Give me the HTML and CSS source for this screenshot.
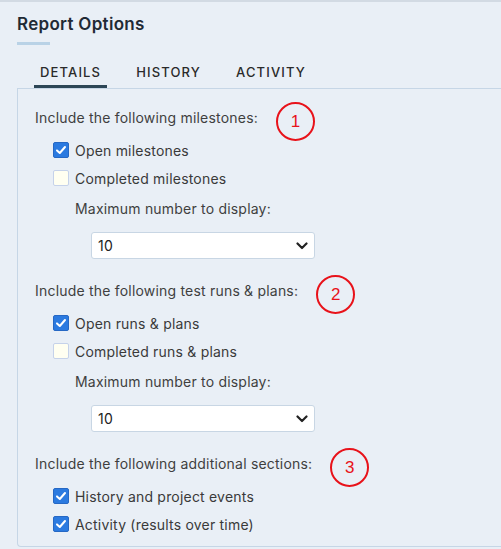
FILE: index.html
```html
<!DOCTYPE html>
<html>
<head>
<meta charset="utf-8">
<link rel="stylesheet" href="styles.css">
</head>
<body>
<div class="page">
  <h1 class="title">Report Options</h1>
  <div class="title-bar"></div>
  <nav class="tabs">
    <span class="tab active">DETAILS</span>
    <span class="tab">HISTORY</span>
    <span class="tab">ACTIVITY</span>
  </nav>
  <section class="panel">
    <div class="heading">Include the following milestones:<span class="mark">1</span></div>
    <div class="options">
      <label class="opt"><span class="box checked"><svg viewBox="0 0 16 16" width="16" height="16"><path d="M4 8.4 L6.8 11 L12 5" fill="none" stroke="#fff" stroke-width="2" stroke-linecap="round" stroke-linejoin="round"/></svg></span>Open milestones</label>
      <label class="opt"><span class="box"></span>Completed milestones</label>
    </div>
    <div class="max-label">Maximum number to display:</div>
    <div class="select"><span>10</span><svg class="chev" viewBox="0 0 12 8" width="12" height="8"><path d="M1.5 1.5 L6 6 L10.5 1.5" fill="none" stroke="#222" stroke-width="2.2" stroke-linecap="round" stroke-linejoin="round"/></svg></div>

    <div class="heading spaced">Include the following test runs &amp; plans:<span class="mark">2</span></div>
    <div class="options">
      <label class="opt"><span class="box checked"><svg viewBox="0 0 16 16" width="16" height="16"><path d="M4 8.4 L6.8 11 L12 5" fill="none" stroke="#fff" stroke-width="2" stroke-linecap="round" stroke-linejoin="round"/></svg></span>Open runs &amp; plans</label>
      <label class="opt"><span class="box"></span>Completed runs &amp; plans</label>
    </div>
    <div class="max-label">Maximum number to display:</div>
    <div class="select"><span>10</span><svg class="chev" viewBox="0 0 12 8" width="12" height="8"><path d="M1.5 1.5 L6 6 L10.5 1.5" fill="none" stroke="#222" stroke-width="2.2" stroke-linecap="round" stroke-linejoin="round"/></svg></div>

    <div class="heading spaced">Include the following additional sections:<span class="mark">3</span></div>
    <div class="options">
      <label class="opt"><span class="box checked"><svg viewBox="0 0 16 16" width="16" height="16"><path d="M4 8.4 L6.8 11 L12 5" fill="none" stroke="#fff" stroke-width="2" stroke-linecap="round" stroke-linejoin="round"/></svg></span>History and project events</label>
      <label class="opt"><span class="box checked"><svg viewBox="0 0 16 16" width="16" height="16"><path d="M4 8.4 L6.8 11 L12 5" fill="none" stroke="#fff" stroke-width="2" stroke-linecap="round" stroke-linejoin="round"/></svg></span>Activity (results over time)</label>
    </div>
  </section>
</div>
</body>
</html>
```
FILE: styles.css
```css
html, body {
  margin: 0;
  padding: 0;
}
body {
  background: #e9eff6;
  font-family: Inter, "Noto Sans", sans-serif;
  color: #3d3d3d;
  font-size: 14px;
  letter-spacing: 0.2px;
  height: 549px;
  overflow: hidden;
}
.page {
  border-top: 2px solid #d2dae3;
  padding-left: 17px;
}
.title {
  margin: 12px 0 0;
  font-size: 17px;
  line-height: 20px;
  font-weight: 600;
  letter-spacing: 0.3px;
  color: #1f2a35;
}
.title-bar {
  margin-top: 8px;
  width: 33px;
  height: 3px;
  background: #b9d2e6;
}
.tabs {
  display: flex;
  gap: 23px;
  margin-top: 17px;
  padding-left: 17px;
}
.tab {
  padding: 0 6px 3px;
  line-height: 20px;
  font-size: 13px;
  font-weight: 500;
  letter-spacing: 1.15px;
  color: #2a2a2a;
  border-bottom: 3px solid transparent;
}
.tab.active {
  border-bottom-color: #2c4656;
}
.panel {
  border: 1px solid #c6d6e6;
  border-right: none;
  border-bottom-left-radius: 4px;
  padding: 19px 0 8px 17px;
}
.heading {
  display: flex;
  align-items: center;
  height: 20px;
  line-height: 20px;
  color: #3f3f3f;
}
.heading.spaced {
  margin-top: 22px;
}
.mark {
  display: inline-flex;
  align-items: center;
  justify-content: center;
  box-sizing: border-box;
  width: 39px;
  height: 39px;
  margin: -6px 0 -13px 18px;
  border: 2px solid #e8121a;
  border-radius: 50%;
  color: #e8121a;
  font-family: "Liberation Sans", Arial, sans-serif;
  font-size: 17px;
  letter-spacing: 0;
}
.options {
  margin-top: 8px;
  padding-left: 18px;
  display: flex;
  flex-direction: column;
}
.opt {
  display: flex;
  align-items: center;
  height: 28px;
  gap: 6px;
  color: #3a3a3a;
}
.box {
  box-sizing: border-box;
  width: 16px;
  height: 16px;
  border: 1px solid #c5d2ea;
  border-radius: 2px;
  background: #fffff1;
  display: flex;
}
.box.checked {
  background: #2b7ae0;
  border-color: #2668c4;
}
.box svg {
  margin: -1px;
}
.max-label {
  margin-top: 7px;
  padding-left: 40px;
  line-height: 20px;
  color: #3f3f3f;
}
.select {
  margin: 13px 0 0 56px;
  box-sizing: border-box;
  width: 224px;
  height: 27px;
  background: #fff;
  border: 1px solid #c8d6e4;
  border-radius: 3px;
  display: flex;
  align-items: center;
  justify-content: space-between;
  padding: 0 6px 0 6px;
  color: #222;
}
.chev {
  display: block;
}
```
